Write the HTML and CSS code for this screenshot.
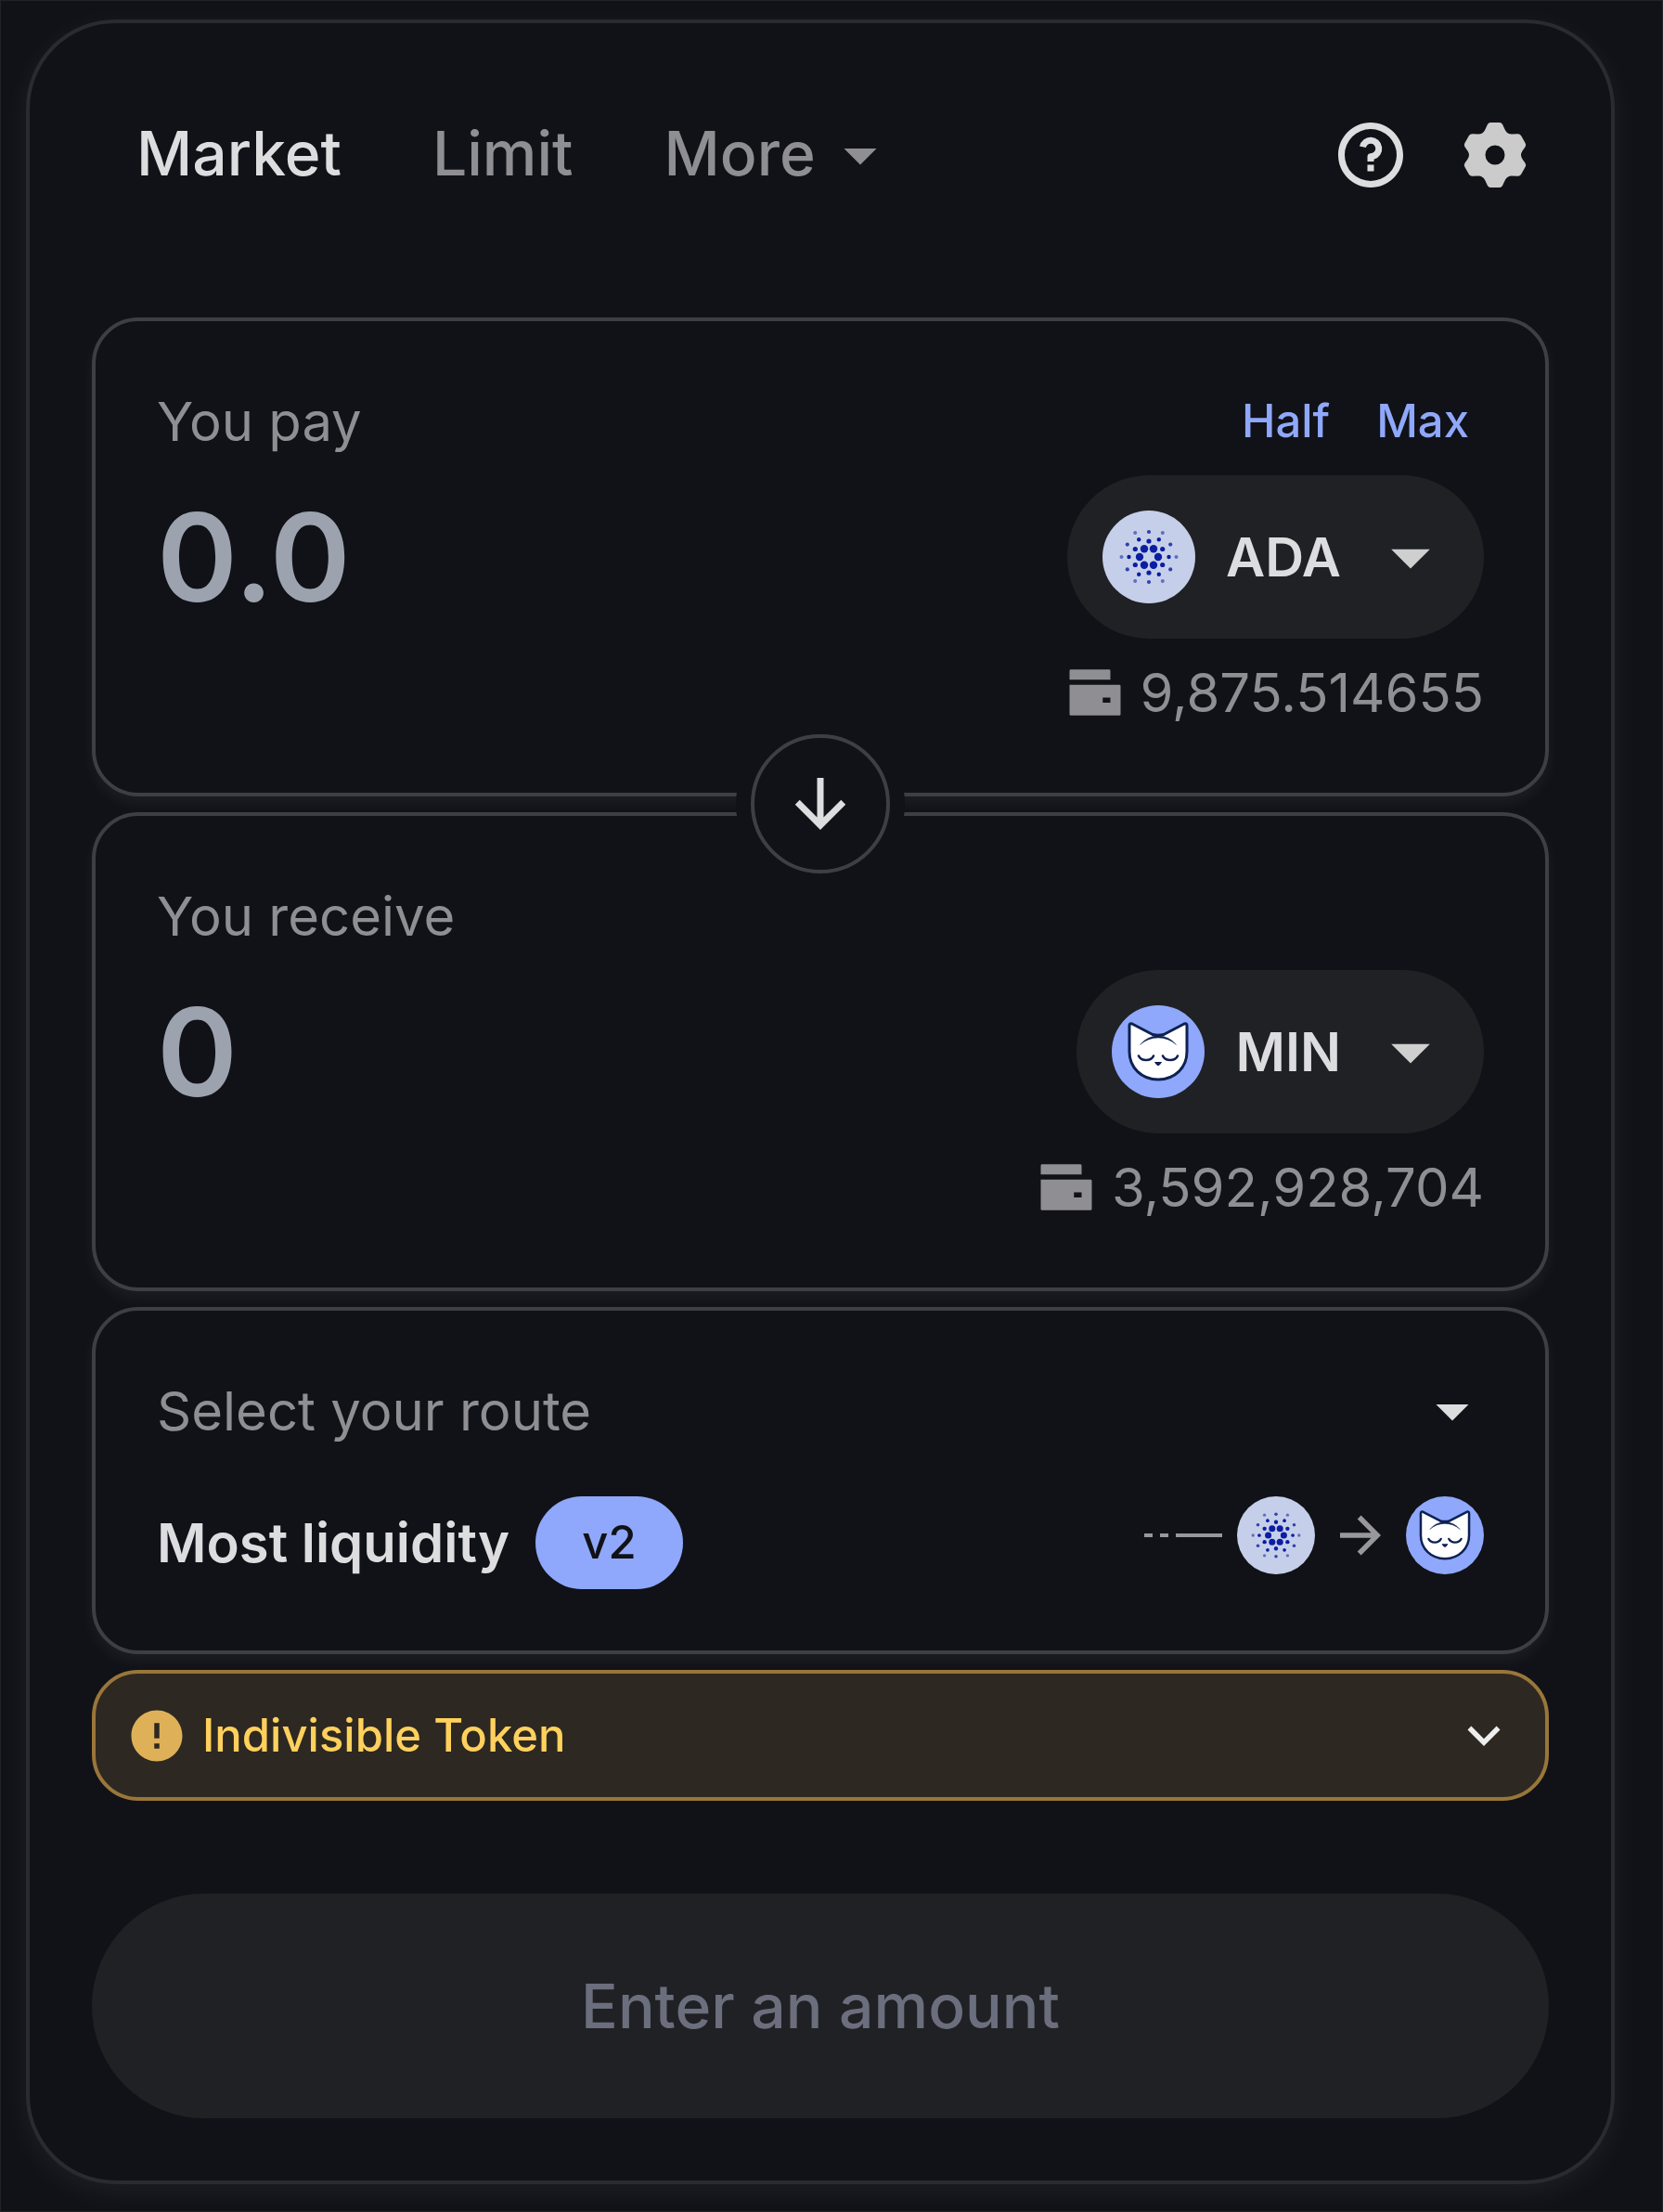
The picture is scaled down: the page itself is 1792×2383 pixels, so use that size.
FILE: index.html
```html
<!DOCTYPE html>
<html lang="en">
<head>
<meta charset="utf-8">
<meta name="viewport" content="width=device-width, initial-scale=1">
<title>Swap</title>
<link rel="stylesheet" href="styles.css">
</head>
<body>
<svg class="defs" aria-hidden="true">
  <symbol id="caret" viewBox="0 0 24 24"><path d="M7 10l5 5 5-5z"/></symbol>
  <symbol id="wallet" viewBox="0 0 24 24"><path fill-rule="evenodd" d="M2.5 3h15a.5.5 0 0 1 .5.5V7H2V3.500a.5.5 0 0 1 .5-.5zM2 9h19.500a.5.5 0 0 1 .5.5v11a.5.5 0 0 1-.5.5h-19a.5.5 0 0 1-.5-.5zM15 14v2h3v-2z"/></symbol>
  <symbol id="ada" viewBox="0 0 100 100">
    <circle cx="50" cy="50" r="50" fill="#c6cfe9"/>
    <g fill="#0a1ea3">
      <circle cx="40" cy="50" r="4.200"/><circle cx="60" cy="50" r="4.200"/>
      <circle cx="45" cy="41.300" r="4.200"/><circle cx="55" cy="41.300" r="4.200"/>
      <circle cx="45" cy="58.700" r="4.200"/><circle cx="55" cy="58.700" r="4.200"/>
      <circle cx="50" cy="33" r="2.600"/><circle cx="50" cy="67" r="2.600"/>
      <circle cx="35.300" cy="41.500" r="2.600"/><circle cx="64.700" cy="41.500" r="2.600"/>
      <circle cx="35.300" cy="58.500" r="2.600"/><circle cx="64.700" cy="58.500" r="2.600"/>
      <circle cx="28.500" cy="50" r="2.200"/><circle cx="71.500" cy="50" r="2.200"/>
      <circle cx="39.200" cy="31.200" r="2.200"/><circle cx="60.800" cy="31.200" r="2.200"/>
      <circle cx="39.200" cy="68.800" r="2.200"/><circle cx="60.800" cy="68.800" r="2.200"/>
      <g opacity=".8">
        <circle cx="50" cy="23" r="2.100"/><circle cx="50" cy="77" r="2.100"/>
        <circle cx="26.800" cy="36.600" r="2.100"/><circle cx="73.200" cy="36.600" r="2.100"/>
        <circle cx="26.800" cy="63.400" r="2.100"/><circle cx="73.200" cy="63.400" r="2.100"/>
      </g>
      <g opacity=".55">
        <circle cx="20.500" cy="50" r="2"/><circle cx="79.500" cy="50" r="2"/>
        <circle cx="35.200" cy="24" r="2"/><circle cx="64.800" cy="24" r="2"/>
        <circle cx="35.200" cy="76" r="2"/><circle cx="64.800" cy="76" r="2"/>
      </g>
    </g>
  </symbol>
  <symbol id="min" viewBox="0 0 100 100">
    <circle cx="50" cy="50" r="50" fill="#8fa8fb"/>
    <path d="M19 22q0-3 3-2l22 11.500q6 1.500 12 0l22-11.500q3-1 3 2v28c0 17-13 30-31 30S19 67 19 50z" fill="#fff" stroke="#0d2152" stroke-width="3" stroke-linejoin="round"/>
    <path d="M30.500 42.500Q38 33 50 33T69.500 42.500Q61 35 50 35T30.500 42.500z" fill="#0d2152" stroke="#0d2152" stroke-width=".4"/>
    <path d="M43 32h14l-5 2.500h-4z" fill="#0d2152"/>
    <path d="M29 54.500q2 4.500 8 4.500t8-4.500M55 54.500q2 4.500 8 4.500t8-4.500" fill="none" stroke="#0d2152" stroke-width="2.600" stroke-linecap="round"/>
    <path d="M46.500 61.500h7L51 64.500h-2z" fill="#0d2152" stroke="#0d2152" stroke-linejoin="round"/>
  </symbol>
</svg>

<main class="card">
  <header class="header">
    <nav class="tabs">
      <button class="tab tab-active" type="button">Market</button>
      <button class="tab" type="button">Limit</button>
      <button class="tab tab-more" type="button">More<svg class="icon-m"><use href="#caret"/></svg></button>
    </nav>
    <div class="actions">
      <button class="icon-button" type="button" aria-label="Help">
        <svg class="icon-m" viewBox="0 0 24 24"><path d="M12 22C6.477 22 2 17.523 2 12S6.477 2 12 2s10 4.477 10 10-4.477 10-10 10zm0-2a8 8 0 1 0 0-16 8 8 0 0 0 0 16zm-1-5h2v2h-2v-2zm2-1.645V14h-2v-1.500a1 1 0 0 1 1-1 1.500 1.500 0 1 0-1.471-1.794l-1.962-.393A3.501 3.501 0 1 1 13 13.355z"/></svg>
      </button>
      <button class="icon-button gear" type="button" aria-label="Settings">
        <svg class="icon-m" viewBox="0 0 24 24"><path fill-rule="evenodd" d="M10.600 2h2.800q.6 0 .9.6l.8 1.700q.7 1.400 2.200 1.300l1.600-.1q.7-.1 1.100.5l1.300 2.300q.4.600 0 1.200l-.9 1.300q-.8 1.200 0 2.400l.9 1.300q.4.600 0 1.200L20 18q-.4.600-1.100.5l-1.600-.1q-1.500-.1-2.200 1.300l-.8 1.700q-.3.600-.9.600h-2.800q-.6 0-.9-.6l-.8-1.700q-.7-1.400-2.200-1.300l-1.600.1Q4.400 18.600 4 18l-1.300-2.300q-.4-.6 0-1.200l.9-1.300q.8-1.200 0-2.400l-.9-1.300q-.4-.6 0-1.200L4 6q.4-.6 1.100-.5l1.600.1q1.500.1 2.200-1.300l.8-1.700q.3-.6.900-.6zM12 9a3 3 0 1 0 0 6 3 3 0 0 0 0-6z"/></svg>
      </button>
    </div>
  </header>

  <div class="stack">
    <section class="box amount">
      <div class="row">
        <label class="label" for="pay">You pay</label>
        <div class="shortcuts">
          <button class="shortcut" type="button">Half</button>
          <button class="shortcut" type="button">Max</button>
        </div>
      </div>
      <div class="row">
        <input class="value" id="pay" type="text" inputmode="decimal" placeholder="0.0">
        <button class="token" type="button">
          <svg class="icon-l"><use href="#ada"/></svg>
          <span>ADA</span>
          <svg class="icon-l token-caret"><use href="#caret"/></svg>
        </button>
      </div>
      <div class="balance"><svg class="icon-s"><use href="#wallet"/></svg><span>9,875.514655</span></div>
      <button class="swap" type="button" aria-label="Switch tokens">
        <svg class="icon-m" viewBox="0 0 24 24"><path d="M13 16.172l5.364-5.364 1.414 1.414L12 20l-7.778-7.778 1.414-1.414L11 16.172V4h2z"/></svg>
      </button>
    </section>

    <section class="box amount">
      <div class="row"><label class="label" for="receive">You receive</label></div>
      <div class="row">
        <input class="value" id="receive" type="text" placeholder="0" readonly>
        <button class="token" type="button">
          <svg class="icon-l"><use href="#min"/></svg>
          <span>MIN</span>
          <svg class="icon-l token-caret"><use href="#caret"/></svg>
        </button>
      </div>
      <div class="balance"><svg class="icon-s"><use href="#wallet"/></svg><span>3,592,928,704</span></div>
    </section>

    <section class="box route">
      <div class="row">
        <h2 class="label">Select your route</h2>
        <button class="icon-button route-toggle" type="button" aria-label="Show routes"><svg class="icon-m"><use href="#caret"/></svg></button>
      </div>
      <div class="row route-row">
        <div class="route-name">Most liquidity <span class="badge">v2</span></div>
        <div class="path">
          <svg class="dashes" viewBox="0 0 84 4"><path d="M0 0h9v4H0zM17 0h9v4h-9zM34 0h50v4H34z"/></svg>
          <svg class="icon-m"><use href="#ada"/></svg>
          <svg class="icon-s" viewBox="0 0 24 24"><path d="M16.172 11l-5.364-5.364 1.414-1.414L20 12l-7.778 7.778-1.414-1.414L16.172 13H4v-2z"/></svg>
          <svg class="icon-m"><use href="#min"/></svg>
        </div>
      </div>
    </section>

    <button class="warning" type="button">
      <svg class="icon-s warning-icon" viewBox="0 0 24 24"><path fill-rule="evenodd" d="M12 22C6.477 22 2 17.523 2 12S6.477 2 12 2s10 4.477 10 10-4.477 10-10 10zm-1-7v2h2v-2zm0-8v6h2V7z"/></svg>
      <span class="warning-text">Indivisible Token</span>
      <svg class="icon-s chevron" viewBox="0 0 24 24"><path d="M12 13.172l4.950-4.950 1.414 1.414L12 16 5.636 9.636 7.050 8.222z"/></svg>
    </button>
  </div>

  <button class="submit" type="button" disabled>Enter an amount</button>
</main>
</body>
</html>
```
FILE: styles.css
```css
:root {
  --bg: #111217;
  --line: #3e3f43;
  --surface: #202125;
  --text: #dddddf;
  --muted: #8e8e93;
  --accent: #8fa8fb;
}

* { box-sizing: border-box; }

body {
  margin: 0;
  padding: 20px 51px 29px 27px;
  border: 1px solid #202226;
  background: var(--bg);
  color: var(--text);
  font: 500 58px/84px Inter, "Liberation Sans", sans-serif;
}

.defs { position: absolute; width: 0; height: 0; }

svg { display: block; flex: none; fill: currentColor; }
.icon-s { width: 66px; height: 66px; }
.icon-m { width: 84px; height: 84px; }
.icon-l { width: 100px; height: 100px; }

button {
  margin: 0;
  padding: 0;
  border: 0;
  background: none;
  color: inherit;
  font: inherit;
}

.card {
  padding: 100px 67px 67px;
  border: 4px solid #2a2b2f;
  border-radius: 96px;
  background: var(--bg);
  box-shadow: 0 8px 32px rgba(255, 255, 255, .06);
}

.header {
  display: flex;
  justify-content: space-between;
  margin-bottom: 133px;
  padding: 0 16px 0 48px;
}
.tabs {
  display: flex;
  align-items: flex-start;
  gap: 98px;
  color: var(--muted);
  font-size: 66px;
  line-height: 80px;
}
.tab-active { color: var(--text); }
.tab-more { display: flex; gap: 6px; }
.actions { display: flex; gap: 50px; }
.gear { color: #cbcbcb; }

.stack { display: flex; flex-direction: column; gap: 17px; margin-bottom: 100px; }

.box {
  display: flex;
  flex-direction: column;
  padding: 66px;
  border: 4px solid var(--line);
  border-radius: 50px;
  background: var(--bg);
  box-shadow: 0 8px 16px rgba(255, 255, 255, .05);
}
.amount { position: relative; gap: 16px; }
.row { display: flex; align-items: center; justify-content: space-between; }
.label { margin: 0; color: var(--muted); font-size: 58px; font-weight: 400; }
.shortcuts { display: flex; gap: 50px; padding-right: 16px; color: var(--accent); font-size: 49px; }

.value {
  flex: 1;
  min-width: 0;
  padding: 0;
  border: 0;
  outline: 0;
  background: none;
  color: var(--text);
  font: 600 132px/160px Inter, "Liberation Sans", sans-serif;
}
.value::placeholder { color: #9ca3af; opacity: 1; }

.token {
  display: flex;
  align-items: center;
  gap: 33px;
  padding: 38px 29px 38px 38px;
  border-radius: 88px;
  background: var(--surface);
  font-weight: 600;
  line-height: 100px;
}
.token-caret { margin-left: -8px; color: #cfcfcf; }

.balance {
  display: flex;
  align-items: center;
  justify-content: flex-end;
  gap: 16px;
  color: var(--muted);
  font-weight: 400;
}

.swap {
  position: absolute;
  z-index: 1;
  bottom: -87px;
  left: calc(50% - 75px);
  display: grid;
  place-items: center;
  width: 150px;
  height: 150px;
  border: 4px solid var(--line);
  border-radius: 50%;
  background: var(--bg);
  box-shadow: 0 0 0 16px var(--bg);
}

.route { gap: 50px; }
.route-toggle { margin-right: -8px; }
.route-row { align-items: flex-start; }
.route-name { display: flex; align-items: center; gap: 28px; font-weight: 600; }
.badge {
  padding: 0 50px;
  border-radius: 50px;
  background: var(--accent);
  color: var(--bg);
  font-size: 49px;
  font-weight: 500;
  line-height: 100px;
}
.path { display: flex; align-items: center; gap: 16px; color: #97979c; }
.dashes { width: 84px; height: 4px; }

.warning {
  display: flex;
  align-items: center;
  gap: 16px;
  padding: 28px 33px;
  border: 4px solid #997639;
  border-radius: 50px;
  background: #2d2822;
  color: #ffd15c;
  font-size: 49px;
  line-height: 77px;
}
.warning-icon { color: #deb158; }
.warning-text { flex: 1; text-align: left; }
.chevron { color: #eeeeee; }

.submit {
  display: block;
  width: 100%;
  padding: 79px;
  border-radius: 121px;
  background: var(--surface);
  color: #6b6e7d;
  font-size: 66px;
}
```
